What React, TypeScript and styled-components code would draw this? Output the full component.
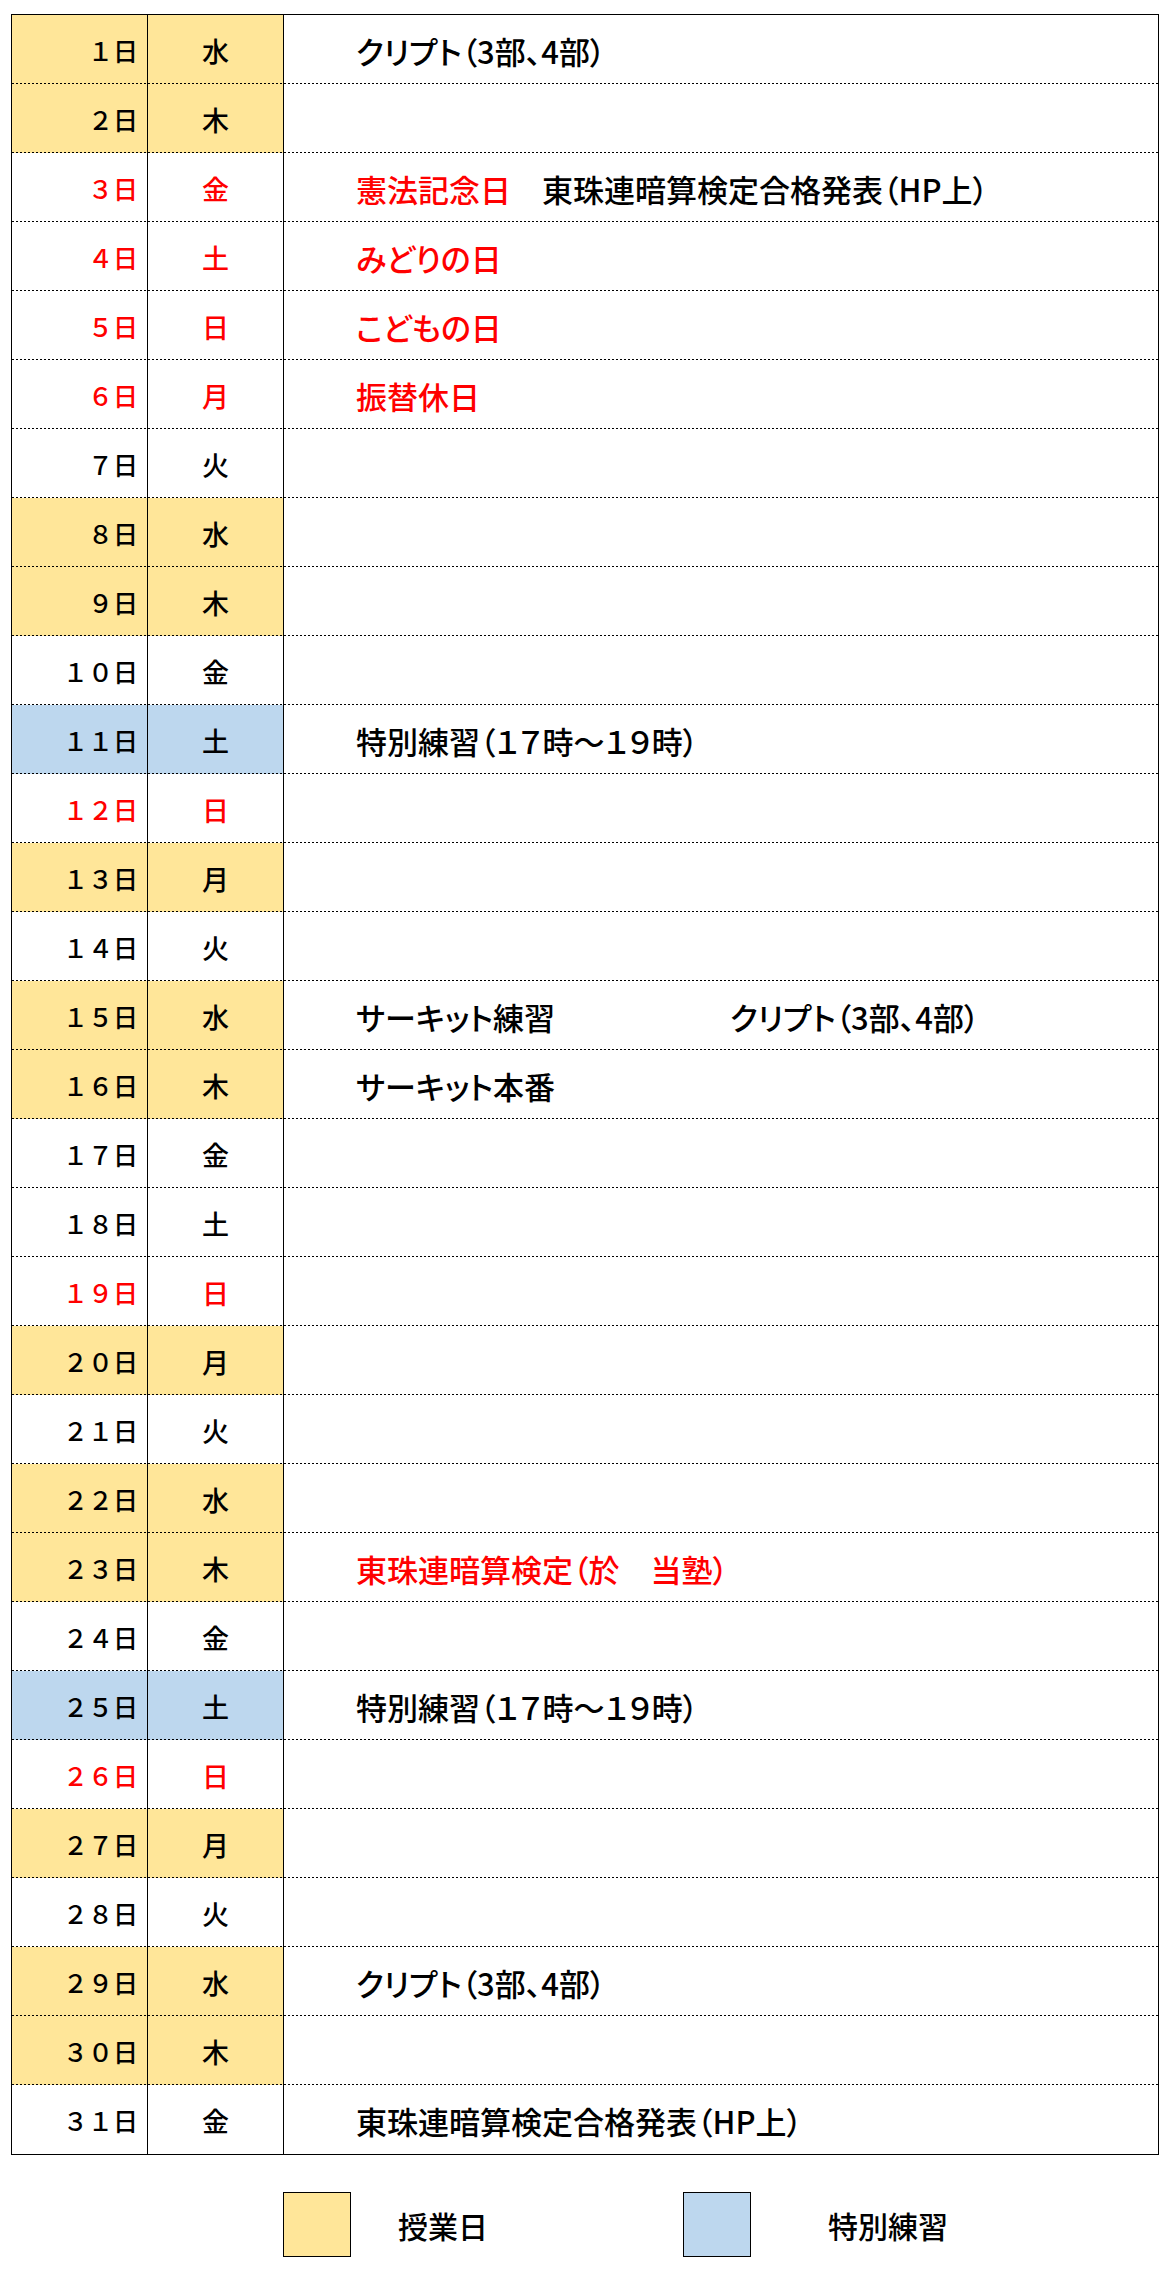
import styled, { createGlobalStyle } from "styled-components";

const GlobalStyle = createGlobalStyle`
  html, body {
    margin: 0;
    padding: 0;
    background: #fff;
  }
  body {
    font-family: "Noto Sans CJK JP", "Noto Sans", sans-serif;
    font-weight: 500;
    color: #000;
  }
`;

type Kind = "class" | "special" | "plain";

interface EventItem {
  text: string;
  red?: boolean;
  minWidth?: number;
  space?: number;
}

interface Day {
  day: string;
  week: string;
  kind: Kind;
  red?: boolean;
  events?: EventItem[];
}

const BG: Record<Kind, string> = {
  class: "#FFE699",
  special: "#BDD7EE",
  plain: "#FFFFFF",
};

const RED = "#FF0000";

const crypt = "クリプト（3部、4部）";
const special = "特別練習（１７時～１９時）";
const result = "東珠連暗算検定合格発表（HP上）";

const DAYS: Day[] = [
  { day: "１日", week: "水", kind: "class", events: [{ text: crypt }] },
  { day: "２日", week: "木", kind: "class" },
  {
    day: "３日",
    week: "金",
    kind: "plain",
    red: true,
    events: [{ text: "憲法記念日", red: true, space: 31 }, { text: result }],
  },
  { day: "４日", week: "土", kind: "plain", red: true, events: [{ text: "みどりの日", red: true }] },
  { day: "５日", week: "日", kind: "plain", red: true, events: [{ text: "こどもの日", red: true }] },
  { day: "６日", week: "月", kind: "plain", red: true, events: [{ text: "振替休日", red: true }] },
  { day: "７日", week: "火", kind: "plain" },
  { day: "８日", week: "水", kind: "class" },
  { day: "９日", week: "木", kind: "class" },
  { day: "１０日", week: "金", kind: "plain" },
  { day: "１１日", week: "土", kind: "special", events: [{ text: special }] },
  { day: "１２日", week: "日", kind: "plain", red: true },
  { day: "１３日", week: "月", kind: "class" },
  { day: "１４日", week: "火", kind: "plain" },
  {
    day: "１５日",
    week: "水",
    kind: "class",
    events: [{ text: "サーキット練習", minWidth: 374 }, { text: crypt }],
  },
  { day: "１６日", week: "木", kind: "class", events: [{ text: "サーキット本番" }] },
  { day: "１７日", week: "金", kind: "plain" },
  { day: "１８日", week: "土", kind: "plain" },
  { day: "１９日", week: "日", kind: "plain", red: true },
  { day: "２０日", week: "月", kind: "class" },
  { day: "２１日", week: "火", kind: "plain" },
  { day: "２２日", week: "水", kind: "class" },
  {
    day: "２３日",
    week: "木",
    kind: "class",
    events: [{ text: "東珠連暗算検定（於　当塾）", red: true }],
  },
  { day: "２４日", week: "金", kind: "plain" },
  { day: "２５日", week: "土", kind: "special", events: [{ text: special }] },
  { day: "２６日", week: "日", kind: "plain", red: true },
  { day: "２７日", week: "月", kind: "class" },
  { day: "２８日", week: "火", kind: "plain" },
  { day: "２９日", week: "水", kind: "class", events: [{ text: crypt }] },
  { day: "３０日", week: "木", kind: "class" },
  { day: "３１日", week: "金", kind: "plain", events: [{ text: result }] },
];

const App = () => {
  return (
    <Page>
      <GlobalStyle />
      <Table>
        {DAYS.map((d, i) => {
          const last = i === DAYS.length - 1;
          return (
            <Row key={d.day}>
              <DayCell $bg={BG[d.kind]} $last={last} $red={d.red}>
                {d.day}
              </DayCell>
              <WeekCell $bg={BG[d.kind]} $last={last} $red={d.red}>
                {d.week}
              </WeekCell>
              <EventCell $last={last}>
                {d.events?.map((e) => (
                  <EventText key={e.text} $red={e.red} $minWidth={e.minWidth} $space={e.space}>
                    {e.text}
                  </EventText>
                ))}
              </EventCell>
            </Row>
          );
        })}
      </Table>
      <Legend>
        <Swatch $bg={BG.class} />
        <LegendLabel $pad={47} $width={332}>授業日</LegendLabel>
        <Swatch $bg={BG.special} />
        <LegendLabel $pad={77}>特別練習</LegendLabel>
      </Legend>
    </Page>
  );
};

export default App;

const Page = styled.div`
  width: 1175px;
  box-sizing: border-box;
  padding: 14px 0 40px 11px;
`;

const Table = styled.div`
  width: 1148px;
  box-sizing: border-box;
  border: 1px solid #000;
`;

const Row = styled.div`
  display: grid;
  grid-template-columns: 136px 136px 1fr;
  height: 69px;
`;

// dotted row separator, drawn at the foot of each cell
const DASH = "repeating-linear-gradient(to right, #000 0 2px, transparent 2px 4px)";

const Cell = styled.div<{ $bg?: string; $last?: boolean }>`
  display: flex;
  align-items: center;
  box-sizing: border-box;
  min-width: 0;
  white-space: nowrap;
  line-height: 1;
  background: ${(p) => (p.$last ? "" : `${DASH} left bottom / 100% 1px no-repeat,`)}
    ${(p) => p.$bg ?? "#fff"};
`;

const DayCell = styled(Cell)<{ $red?: boolean }>`
  justify-content: flex-end;
  padding: 2px 9px 0 0;
  border-right: 1px solid #000;
  font-size: 25px;
  color: ${(p) => (p.$red ? RED : "#000")};
`;

const WeekCell = styled(Cell)<{ $red?: boolean }>`
  justify-content: center;
  padding-top: 2px;
  border-right: 1px solid #000;
  font-size: 27px;
  color: ${(p) => (p.$red ? RED : "#000")};
`;

const EventCell = styled(Cell)`
  padding: 2px 0 0 72px;
  font-size: 31px;
  font-feature-settings: "palt";
`;

const EventText = styled.span<{ $red?: boolean; $minWidth?: number; $space?: number }>`
  display: inline-block;
  color: ${(p) => (p.$red ? RED : "#000")};
  min-width: ${(p) => (p.$minWidth ? `${p.$minWidth}px` : "auto")};
  margin-right: ${(p) => p.$space ?? 0}px;
`;

const Legend = styled.div`
  display: flex;
  align-items: center;
  margin: 37px 0 0 272px;
  height: 65px;
`;

const Swatch = styled.div<{ $bg: string }>`
  width: 68px;
  height: 65px;
  box-sizing: border-box;
  border: 1px solid #000;
  background: ${(p) => p.$bg};
  flex-shrink: 0;
`;

const LegendLabel = styled.span<{ $pad: number; $width?: number }>`
  box-sizing: border-box;
  padding-left: ${(p) => p.$pad}px;
  width: ${(p) => (p.$width ? `${p.$width}px` : "auto")};
  font-size: 30px;
  line-height: 1;
  white-space: nowrap;
`;
